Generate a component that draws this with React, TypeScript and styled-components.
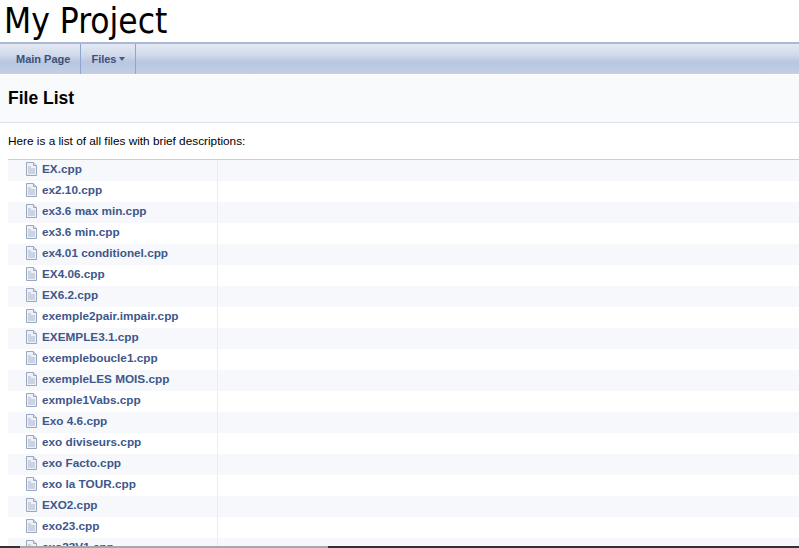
import React from 'react';
import styled, { createGlobalStyle } from 'styled-components';

const GlobalStyle = createGlobalStyle`
  html, body {
    margin: 0;
    padding: 0;
    background: #fff;
    overflow: hidden;
  }
`;

const Page = styled.div`
  display: flex;
  flex-direction: column;
  height: 548px;
  overflow: hidden;
  font-family: 'Liberation Sans', Arial, sans-serif;
  font-size: 12px;
`;

const ProjectName = styled.div`
  flex: none;
  padding-left: 4px;
  font-family: 'DejaVu Sans', sans-serif;
  font-stretch: condensed;
  font-size: 35px;
  line-height: 42px;
  color: #000;
`;

const NavBar = styled.nav`
  display: flex;
  flex: none;
  height: 30px;
  border-top: 2px solid #a9b9d6;
  background: linear-gradient(#e3e8f3 0%, #d2dbeb 35%, #b8c6e0 60%, #c4cfe5 100%);
`;

const NavItem = styled.div<{ $first?: boolean }>`
  display: flex;
  align-items: center;
  gap: 3px;
  padding: 0 ${p => (p.$first ? '10px' : '10px')} 0 ${p => (p.$first ? '16px' : '10px')};
  border-right: 1px solid #8fa5cf;
  font-weight: bold;
  font-size: 11px;
  color: #3f5078;
`;

const Caret = styled.span`
  width: 0;
  height: 0;
  border-left: 3.5px solid transparent;
  border-right: 3.5px solid transparent;
  border-top: 4px solid #4a5a80;
`;

const TitleArea = styled.div`
  flex: none;
  height: 48px;
  margin-top: 1px;
  padding: 0 0 1px 8px;
  box-sizing: border-box;
  display: flex;
  align-items: center;
  background: #f9fafc;
  border-bottom: 1px solid #d9dfee;
`;

const Title = styled.h1`
  margin: 0;
  font-size: 17.5px;
  font-weight: bold;
  color: #000;
`;

const Intro = styled.p`
  margin: 11px 0 0 8px;
  height: 25px;
  font-size: 11.8px;
  line-height: 15px;
  color: #000;
`;

const FileTable = styled.div`
  flex: 1;
  min-height: 0;
  overflow: hidden;
  margin-left: 8px;
  border-top: 1px solid #c4cfe5;
`;

const Row = styled.div<{ $odd: boolean }>`
  display: grid;
  grid-template-columns: 210px 1fr;
  height: 21px;
  background: ${p => (p.$odd ? '#f7f8fb' : '#fff')};
`;

const NameCell = styled.div`
  display: flex;
  align-items: center;
  gap: 4px;
  padding: 0 0 4px 17px;
  border-right: 1px solid #e9edf5;
`;

const FileLink = styled.a`
  font-weight: bold;
  font-size: 11.75px;
  color: #3d578c;
  white-space: nowrap;
`;

const BottomEdge = styled.div`
  flex: none;
  height: 2px;
  display: grid;
  grid-template-columns: 20px 308px 1fr;
`;

const EdgePart = styled.div<{ $tone: string }>`
  background: ${p => p.$tone};
`;

const DocIcon = () => (
  <svg width="13" height="14" viewBox="0 0 13 14" fill="none">
    <path d="M1.5.5h7l3 3v10h-10z" fill="#eef1f7" stroke="#9aa7c2" />
    <path d="M8.5.5v3h3" fill="#dfe4f0" stroke="#9aa7c2" />
    <path d="M3 5h3M3 7h7M3 9h7M3 11h7" stroke="#a9b5cc" />
  </svg>
);

const files = [
  'EX.cpp',
  'ex2.10.cpp',
  'ex3.6 max min.cpp',
  'ex3.6 min.cpp',
  'ex4.01 conditionel.cpp',
  'EX4.06.cpp',
  'EX6.2.cpp',
  'exemple2pair.impair.cpp',
  'EXEMPLE3.1.cpp',
  'exempleboucle1.cpp',
  'exempleLES MOIS.cpp',
  'exmple1Vabs.cpp',
  'Exo 4.6.cpp',
  'exo diviseurs.cpp',
  'exo Facto.cpp',
  'exo la TOUR.cpp',
  'EXO2.cpp',
  'exo23.cpp',
  'exo23V1.cpp',
];

export default function App() {
  return (
    <Page>
      <GlobalStyle />
      <ProjectName>My Project</ProjectName>
      <NavBar>
        <NavItem $first>Main Page</NavItem>
        <NavItem>
          Files <Caret />
        </NavItem>
      </NavBar>
      <TitleArea>
        <Title>File List</Title>
      </TitleArea>
      <Intro>Here is a list of all files with brief descriptions:</Intro>
      <FileTable>
        {files.map((name, i) => (
          <Row key={name} $odd={i % 2 === 0}>
            <NameCell>
              <DocIcon />
              <FileLink>{name}</FileLink>
            </NameCell>
            <div />
          </Row>
        ))}
      </FileTable>
      <BottomEdge>
        <EdgePart $tone="#333" />
        <EdgePart $tone="#a8a8a8" />
        <EdgePart $tone="#333" />
      </BottomEdge>
    </Page>
  );
}
